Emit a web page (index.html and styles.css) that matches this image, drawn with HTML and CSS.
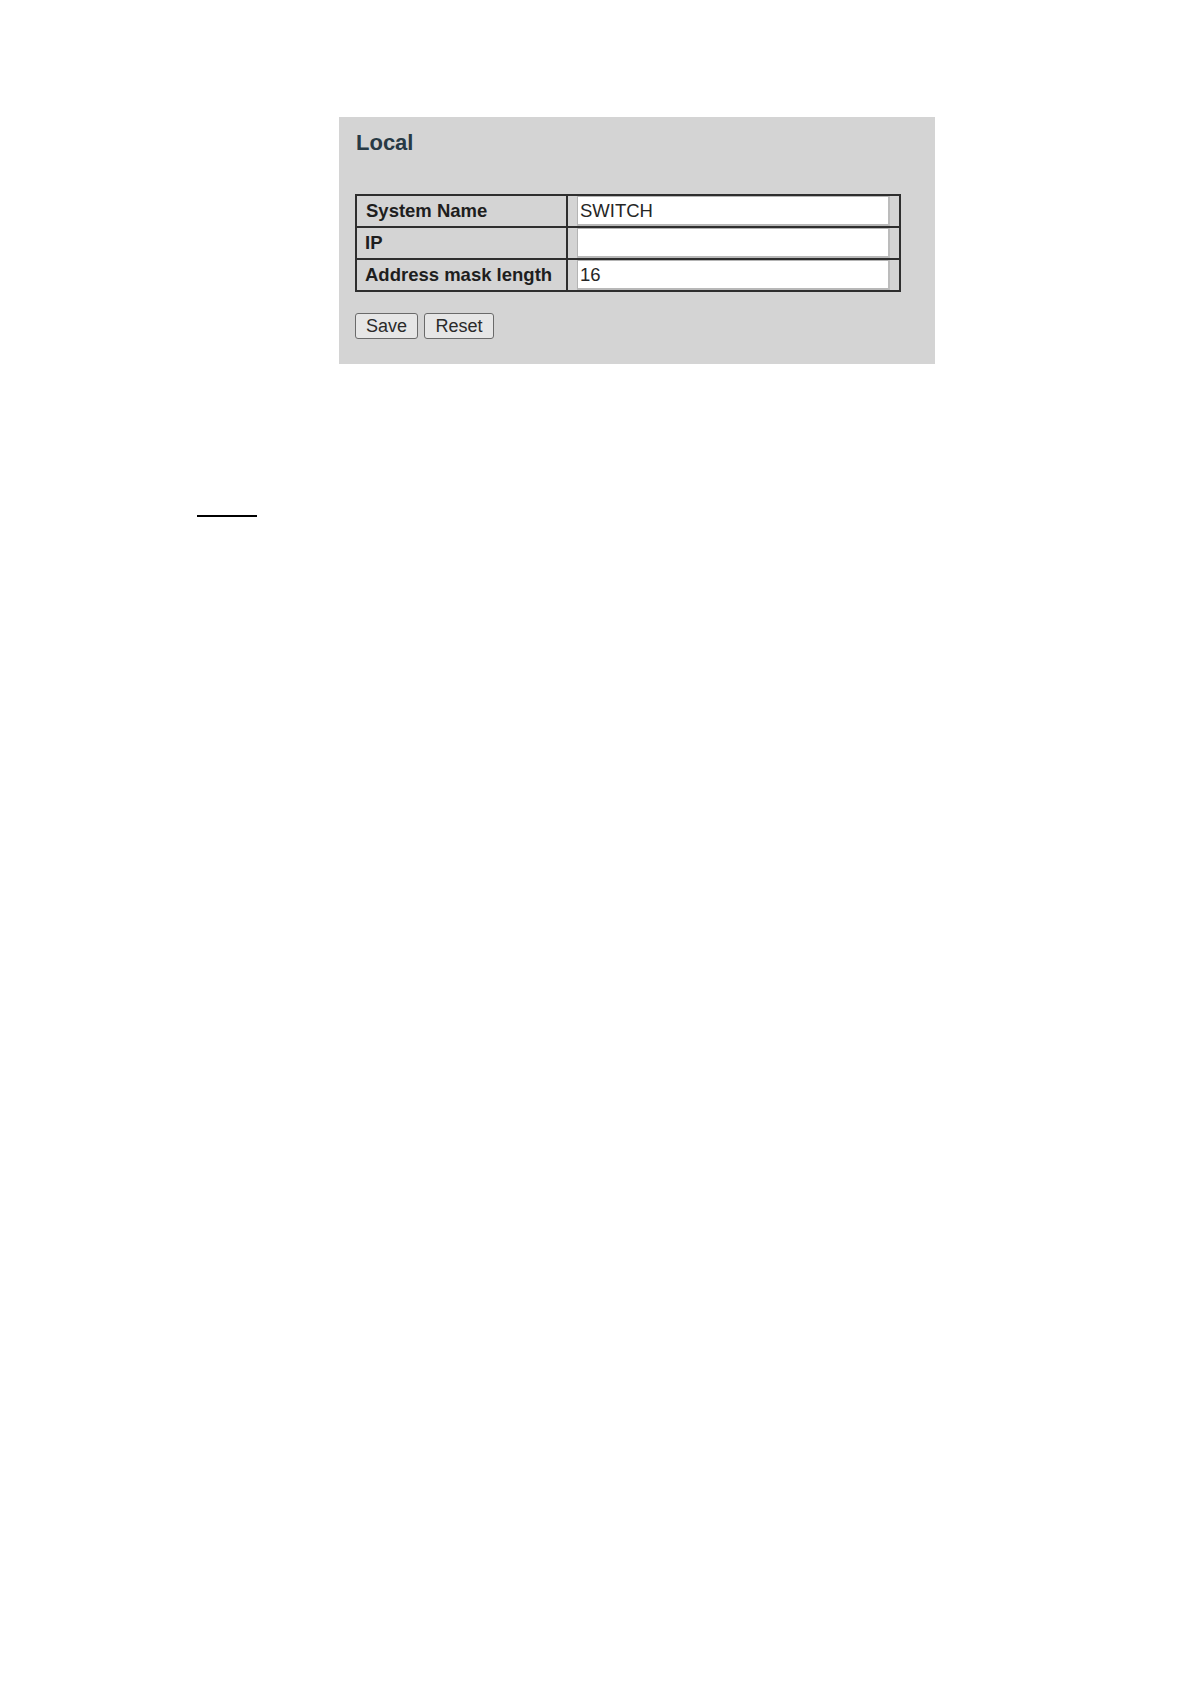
FILE: index.html
```html
<!DOCTYPE html>
<html>
<head>
<meta charset="utf-8">
<link rel="stylesheet" href="styles.css">
</head>
<body>
<div class="page">
  <div class="panel">
    <h1 class="title">Local</h1>
    <table class="config">
      <colgroup>
        <col class="col-label">
        <col class="col-field">
      </colgroup>
      <tr>
        <th class="label">System Name</th>
        <td class="field"><input class="text" type="text" value="SWITCH"></td>
      </tr>
      <tr>
        <th class="label">IP</th>
        <td class="field"><input class="text" type="text" value=""></td>
      </tr>
      <tr>
        <th class="label">Address mask length</th>
        <td class="field"><input class="text" type="text" value="16"></td>
      </tr>
    </table>
    <div class="buttons">
      <button class="btn btn-save">Save</button>
      <button class="btn btn-reset">Reset</button>
    </div>
  </div>
  <div class="rule"></div>
</div>
</body>
</html>
```
FILE: styles.css
```css
html, body {
  margin: 0;
  padding: 0;
  background: #ffffff;
}
.page {
  padding-top: 117px;
  font-family: "Liberation Sans", Arial, sans-serif;
}
.panel {
  margin-left: 339px;
  width: 596px;
  height: 247px;
  box-sizing: border-box;
  background: #d4d4d4;
  padding: 13px 0 0 16px;
}
.title {
  margin: 0;
  font-size: 22px;
  line-height: 25px;
  font-weight: bold;
  color: #273a45;
  padding-left: 1px;
}
.config {
  margin-top: 39px;
  width: 544px;
  border-collapse: collapse;
  border: 2px solid #2e2e2e;
  table-layout: fixed;
}
.col-label {
  width: 211px;
}
.col-field {
  width: 333px;
}
.config tr {
  height: 31.5px;
}
.label {
  border: 2px solid #2e2e2e;
  text-align: left;
  font-weight: bold;
  font-size: 18.5px;
  color: #1e1e1e;
  padding: 0 0 0 9px;
  background: #d4d4d4;
  white-space: nowrap;
  vertical-align: middle;
  overflow: hidden;
}
.config tr:nth-child(2) .label,
.config tr:nth-child(3) .label {
  padding-left: 8px;
}
.field {
  border: 2px solid #2e2e2e;
  padding: 0 0 0 9px;
  background: #d4d4d4;
  vertical-align: middle;
}
.text {
  display: block;
  box-sizing: border-box;
  width: 313px;
  height: 30px;
  margin: 0;
  border: 1px solid #b4b4b4;
  border-bottom: 2px solid #b8b8b8;
  border-right: 2px solid #bcbcbc;
  background: #ffffff;
  font-family: "Liberation Sans", Arial, sans-serif;
  font-size: 18.5px;
  color: #262626;
  padding: 0 0 0 2px;
  outline: none;
}
.buttons {
  margin-top: 21px;
  display: flex;
  gap: 6px;
}
.btn {
  box-sizing: border-box;
  height: 26px;
  margin: 0;
  padding: 0;
  border: 1.5px solid #6a6a6a;
  border-radius: 3px;
  background: #e6e6e6;
  font-family: "Liberation Sans", Arial, sans-serif;
  font-size: 18px;
  color: #2a2a2a;
  line-height: 22px;
}
.btn-save {
  width: 63px;
}
.btn-reset {
  width: 70px;
}
.rule {
  margin-top: 151px;
  margin-left: 197px;
  width: 60px;
  height: 0;
  border-top: 2px solid #000000;
}
```
